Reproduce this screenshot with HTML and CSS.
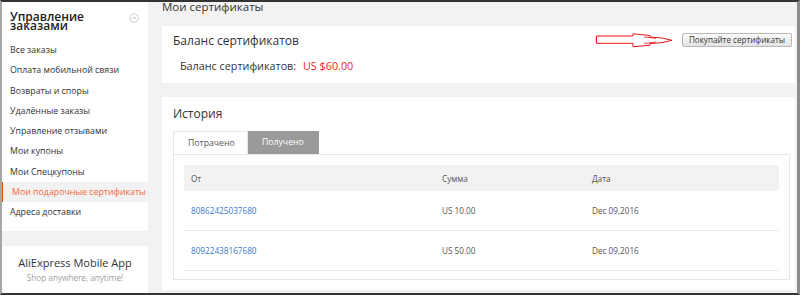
FILE: index.html
```html
<!DOCTYPE html>
<html lang="ru">
<head>
    <meta charset="UTF-8">
    <meta name="viewport" content="width=device-width, initial-scale=1.0">
    <title>Мои сертификаты</title>
    <link rel="stylesheet" href="styles.css">
</head>
<body>
    <div class="frame">
        <!-- Боковое меню -->
        <aside class="sidebar">
            <div class="side-card">
                <div class="side-head">
                    <h2>Управление<br>заказами</h2>
                    <svg class="toggle" width="10" height="10" viewBox="0 0 10 10">
                        <circle cx="5" cy="5" r="4.2" fill="none" stroke="#c4c4c4" stroke-width="0.9"/>
                        <line x1="3" y1="5" x2="7" y2="5" stroke="#b0b0b0" stroke-width="0.9"/>
                    </svg>
                </div>
                <ul class="menu">
                    <li>Все заказы</li>
                    <li>Оплата мобильной связи</li>
                    <li>Возвраты и споры</li>
                    <li>Удалённые заказы</li>
                    <li>Управление отзывами</li>
                    <li>Мои купоны</li>
                    <li>Мои Спецкупоны</li>
                    <li class="active">Мои подарочные сертификаты</li>
                    <li>Адреса доставки</li>
                </ul>
            </div>
            <div class="side-card app-card">
                <div class="app-title">AliExpress Mobile App</div>
                <div class="app-sub">Shop anywhere, anytime!</div>
            </div>
        </aside>

        <main class="content">
            <h1 class="page-title">Мои сертификаты</h1>

            <section class="card balance-card">
                <div class="card-head">
                    <h3>Баланс сертификатов</h3>
                    <div class="buy">
                        <svg class="arrow" width="77" height="15" viewBox="0 0 77 15">
                            <polygon points="0.5,3 37,3 37,0.8 54,2.5 54,4 66,5 76,7.3 66,9.6 54,10.6 54,12.2 37,13.8 37,10.3 0.5,10.3" fill="none" stroke="#e8141b" stroke-width="1"/>
                            <polyline points="48,4 60,5.3" fill="none" stroke="#e8141b" stroke-width="0.8"/>
                            <polyline points="48,10.4 60,9.2" fill="none" stroke="#e8141b" stroke-width="0.8"/>
                        </svg>
                        <button class="buy-btn">Покупайте сертификаты</button>
                    </div>
                </div>
                <div class="balance-row">
                    <span>Баланс сертификатов:</span>
                    <span class="amount">US $60.00</span>
                </div>
            </section>

            <section class="card history-card">
                <h3>История</h3>
                <div class="tabs">
                    <div class="tab">Потрачено</div>
                    <div class="tab tab-active">Получено</div>
                </div>
                <div class="tab-box">
                    <div class="row row-head">
                        <div>От</div>
                        <div>Сумма</div>
                        <div>Дата</div>
                    </div>
                    <div class="row">
                        <div><a href="#">80862425037680</a></div>
                        <div>US 10.00</div>
                        <div>Dec 09,2016</div>
                    </div>
                    <div class="row">
                        <div><a href="#">80922438167680</a></div>
                        <div>US 50.00</div>
                        <div>Dec 09,2016</div>
                    </div>
                </div>
            </section>
        </main>
    </div>
</body>
</html>
```

FILE: styles.css
```css
body {
    margin: 0;
    padding: 0;
    font-family: "Open Sans", "Liberation Sans", sans-serif;
    color: #333;
    background-color: #f2f2f2;
}

.frame {
    display: flex;
    height: 295px;
    box-sizing: border-box;
    border-top: 2px solid #333;
    border-bottom: 2px solid #333;
    border-left: 2px solid #a6a6a6;
    border-right: 3px solid #8c8c8c;
    background-color: #f2f2f2;
    overflow: hidden;
}

/* Боковое меню */

.sidebar {
    width: 146px;
    display: flex;
    flex-direction: column;
    gap: 15px;
    flex-shrink: 0;
}

.side-card {
    background-color: #fff;
}

.side-head {
    display: flex;
    justify-content: space-between;
    align-items: flex-start;
    padding: 10px 9px 0 8px;
}

.side-head h2 {
    margin: 0;
    font-size: 12px;
    font-weight: 600;
    line-height: 9px;
    color: #222;
    padding-bottom: 8px;
}

.toggle {
    margin-top: 1px;
}

.menu {
    list-style: none;
    margin: 0;
    padding: 0 0 9px 0;
    margin-top: 2px;
}

.menu li {
    height: 20.25px;
    line-height: 20.25px;
    padding-left: 8px;
    font-size: 8.8px;
    color: #333;
    white-space: nowrap;
}

.menu li.active {
    margin-left: -2px;
    padding-left: 9px;
    border-left: 3px solid #e2531b;
    background-color: #f2f2f2;
    color: #f56a3d;
}

.app-card {
    flex: 1;
    text-align: center;
    padding-top: 9px;
}

.app-title {
    font-size: 11px;
    line-height: 15px;
    color: #333;
}

.app-sub {
    margin-top: 2px;
    font-size: 8.2px;
    line-height: 12px;
    color: #a0a0a0;
}

/* Основная часть */

.content {
    flex: 1;
    margin-left: 14px;
    margin-right: 2px;
    display: flex;
    flex-direction: column;
}

.page-title {
    margin: 0;
    height: 24px;
    font-size: 11.5px;
    font-weight: normal;
    line-height: 9px;
    color: #333;
}

.card {
    background-color: #fff;
}

.card h3 {
    margin: 0;
    font-size: 12px;
    font-weight: normal;
    line-height: 16px;
    color: #333;
}

.balance-card {
    padding: 7px 3px 9px 11px;
}

.card-head {
    display: flex;
    justify-content: space-between;
    align-items: flex-start;
}

.buy {
    display: flex;
    align-items: flex-start;
    gap: 9px;
}

.arrow {
    display: block;
}

.buy-btn {
    height: 14px;
    padding: 0 6px;
    border: 1px solid #b8b8b8;
    border-radius: 2px;
    background: linear-gradient(#fafafa, #e4e4e4);
    font-family: "Open Sans", "Liberation Sans", sans-serif;
    font-size: 8.1px;
    line-height: 12px;
    color: #333;
}

.balance-row {
    margin-top: 9px;
    padding-left: 7px;
    font-size: 10.8px;
    line-height: 16px;
    color: #333;
}

.amount {
    margin-left: 4px;
    color: #f21c1c;
}

.history-card {
    margin-top: 14px;
    padding: 9px 5px 10px 11px;
}

.tabs {
    display: flex;
    margin-top: 9px;
}

.tab {
    height: 23px;
    line-height: 23px;
    padding: 0 14px;
    font-size: 8.7px;
    color: #555;
    border: 1px solid #e6e6e6;
    border-bottom: none;
    box-sizing: border-box;
}

.tab:first-child {
    width: 75px;
}

.tab-active {
    width: 71px;
    border: none;
    background-color: #9a9a9a;
    color: #fff;
}

.tab-box {
    border: 1px solid #e6e6e6;
    padding: 10px 10px 8px 10px;
}

.row {
    display: grid;
    grid-template-columns: 251px 150px 1fr;
    height: 40px;
    box-sizing: border-box;
    border-bottom: 1px solid #e8e8e8;
    align-items: center;
    font-size: 8.2px;
    color: #555;
}

.row > div {
    padding-left: 7px;
}

.row-head {
    height: 26px;
    border-bottom: none;
    background-color: #f2f2f2;
}

.row a {
    color: #3a78cc;
    text-decoration: none;
}
```
